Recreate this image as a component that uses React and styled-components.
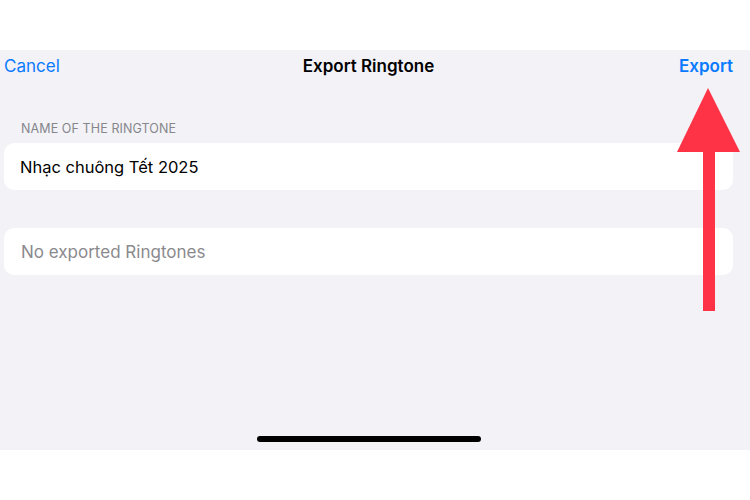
import React from 'react';
import styled, { createGlobalStyle } from 'styled-components';

const GlobalStyle = createGlobalStyle`
  html, body {
    margin: 0;
    padding: 0;
    background: #ffffff;
    font-family: Inter, "Noto Sans", "Liberation Sans", sans-serif;
  }
`;

const Page = styled.div`
  position: relative;
  width: 750px;
  height: 500px;
  padding: 50px 0;
  box-sizing: border-box;
  background: #ffffff;
  overflow: hidden;
`;

const Sheet = styled.div`
  display: flex;
  flex-direction: column;
  height: 400px;
  background: #f2f2f7;
  padding: 0 17px 0 4px;
  box-sizing: border-box;
`;

const NavBar = styled.div`
  display: grid;
  grid-template-columns: 1fr auto 1fr;
  align-items: center;
  height: 32px;
`;

const NavButton = styled.span`
  font-size: 17px;
  color: #0a7aff;
  font-weight: ${({ bold }) => (bold ? 600 : 400)};
  justify-self: ${({ right }) => (right ? 'end' : 'start')};
`;

const Title = styled.span`
  font-size: 17px;
  font-weight: 600;
  color: #000000;
`;

const SectionLabel = styled.div`
  margin: 39px 0 0 17px;
  font-size: 12.5px;
  letter-spacing: 0.1px;
  color: #86868b;
  text-transform: uppercase;
  line-height: 16px;
`;

const Card = styled.div`
  display: flex;
  align-items: center;
  height: 47px;
  margin-top: ${({ gap }) => gap}px;
  padding-left: ${({ muted }) => (muted ? 17 : 16)}px;
  background: #ffffff;
  border-radius: 10px;
  font-size: ${({ muted }) => (muted ? 17 : 16.5)}px;
  color: ${({ muted }) => (muted ? '#8a8a8e' : '#000000')};
`;

const Spacer = styled.div`
  flex: 1;
`;

const HomeIndicator = styled.div`
  align-self: center;
  width: 224px;
  height: 6px;
  margin: 0 0 8px 0;
  border-radius: 3px;
  background: #000000;
`;

const Arrow = styled.svg`
  position: absolute;
  left: 676px;
  top: 87px;
`;

export default function App() {
  return (
    <>
      <GlobalStyle />
      <Page>
        <Sheet>
          <NavBar>
            <NavButton>Cancel</NavButton>
            <Title>Export Ringtone</Title>
            <NavButton right bold>Export</NavButton>
          </NavBar>
          <SectionLabel>Name of the Ringtone</SectionLabel>
          <Card gap={6}>Nhạc chuông Tết 2025</Card>
          <Card gap={38} muted>No exported Ringtones</Card>
          <Spacer />
          <HomeIndicator />
        </Sheet>
        <Arrow width="66" height="226" viewBox="0 0 66 226">
          <polygon points="32,1 1,65 64,65" fill="#fe3346" />
          <rect x="27" y="64" width="12" height="160" fill="#fe3346" />
        </Arrow>
      </Page>
    </>
  );
}
